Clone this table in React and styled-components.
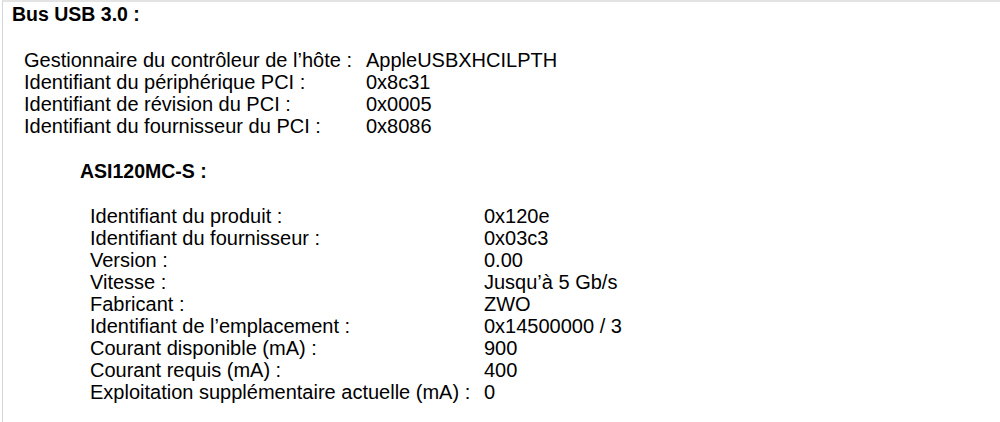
import React from "react";
import styled, { createGlobalStyle } from "styled-components";

const GlobalStyle = createGlobalStyle`
  html, body {
    margin: 0;
    padding: 0;
    background: #ffffff;
  }
  body {
    font-family: "Liberation Sans", Arial, sans-serif;
    color: #000;
  }
`;

const Frame = styled.div`
  width: 1000px;
  height: 422px;
  box-sizing: border-box;
  border-top: 2px solid #e3e3e3;
  border-left: 1px solid #d6d6d6;
  margin-left: 2px;
  overflow: hidden;
`;

const Title = styled.div`
  font-weight: bold;
  font-size: 19.5px;
  line-height: 22px;
  padding-left: ${(p) => p.indent}px;
  margin-top: ${(p) => p.top}px;
`;

const Props = styled.div`
  display: grid;
  grid-template-columns: ${(p) => p.labelWidth}px auto;
  padding-left: ${(p) => p.indent}px;
  margin-top: ${(p) => p.top}px;
  font-size: 20px;
  line-height: 22px;
`;

const Cell = styled.div`
  white-space: nowrap;
`;

const busRows = [
  ["Gestionnaire du contrôleur de l’hôte :", "AppleUSBXHCILPTH"],
  ["Identifiant du périphérique PCI :", "0x8c31"],
  ["Identifiant de révision du PCI :", "0x0005"],
  ["Identifiant du fournisseur du PCI :", "0x8086"],
];

const deviceRows = [
  ["Identifiant du produit :", "0x120e"],
  ["Identifiant du fournisseur :", "0x03c3"],
  ["Version :", "0.00"],
  ["Vitesse :", "Jusqu’à 5 Gb/s"],
  ["Fabricant :", "ZWO"],
  ["Identifiant de l’emplacement :", "0x14500000 / 3"],
  ["Courant disponible (mA) :", "900"],
  ["Courant requis (mA) :", "400"],
  ["Exploitation supplémentaire actuelle (mA) :", "0"],
];

const PropList = ({ rows, ...rest }) => (
  <Props {...rest}>
    {rows.map(([k, v]) => (
      <React.Fragment key={k}>
        <Cell>{k}</Cell>
        <Cell>{v}</Cell>
      </React.Fragment>
    ))}
  </Props>
);

export default function App() {
  return (
    <>
      <GlobalStyle />
      <Frame>
        <Title indent={9} top={1}>Bus USB 3.0 :</Title>
        <PropList rows={busRows} indent={21} labelWidth={342} top={24} />
        <Title indent={77} top={23}>ASI120MC-S :</Title>
        <PropList rows={deviceRows} indent={87} labelWidth={394} top={23} />
      </Frame>
    </>
  );
}
